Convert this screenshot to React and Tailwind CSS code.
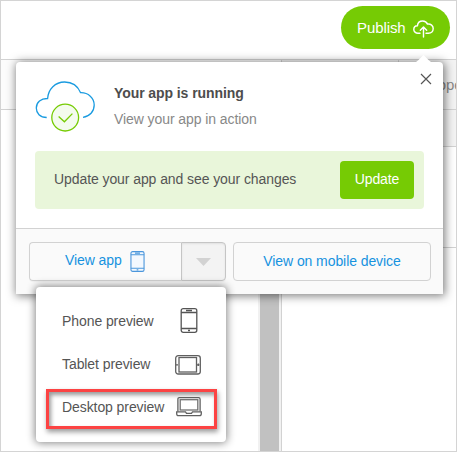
import React from "react";

const UploadCloud = () => (
  <svg width="21" height="18" viewBox="0 0 21 18" fill="none" stroke="#fff" strokeWidth="1.45" strokeLinecap="round" strokeLinejoin="round">
    <path d="M7 13.200H5C2.600 13.200.8 11.600.8 9.500c0-2 1.500-3.600 3.600-3.700C4.700 3 6.900 1 9.700 1c2.200 0 4 1.200 4.800 3.100 3.300-.4 5.700 1.600 5.700 4.500 0 2.700-2 4.600-4.700 4.600H13" />
    <path d="M10.500 17V7.300M7.300 10.300l3.200-3.200 3.200 3.200" />
  </svg>
);

const CloudCheck = () => (
  <svg width="62" height="54" viewBox="0 0 62 54" fill="none" strokeWidth="1.3">
    <path d="M11.700 37.500C5 37.500 1.300 33.300 1.300 28c0-5.500 4.700-9.700 11.300-9.500C13.300 9 20.200 2 29.600 2c7.200 0 13.200 4 16 10.700C53.300 12.500 59.200 18 59.200 25c0 6.500-4.500 11.400-11.200 12.300" stroke="#1a9be0" />
    <circle cx="30.200" cy="37.600" r="13.400" fill="#f4fbee" stroke="#76cb04" />
    <path d="M23.600 36.500l5.800 5.300 8-8.200" stroke="#76cb04" />
  </svg>
);

const Phone = ({ className, width, height, fill }) => (
  <svg className={className} width={width} height={height} viewBox="0 0 17 25" fill="none" stroke="currentColor" strokeWidth="1.3">
    <rect x=".7" y=".7" width="15.600" height="23.600" rx="2" fill={fill} />
    <path d="M.6 4.500h15.800M.6 20.500h15.800M5.500 2.500h6M7.500 22.500h2" />
  </svg>
);

const Tablet = () => (
  <svg width="26" height="20" viewBox="0 0 26 20" fill="none" stroke="#606060" strokeWidth="1.3">
    <rect x=".7" y=".7" width="24.600" height="18.300" rx="2.500" />
    <rect x="4" y="2.500" width="17.500" height="14.500" />
    <path d="M1 9.800h2M22 9.800h2.500M23.300 8.500v2.600" />
  </svg>
);

const Laptop = () => (
  <svg width="26" height="20" viewBox="0 0 26 20" fill="none" stroke="#606060" strokeWidth="1.3">
    <path d="M1.900 14.500V2.200Q1.900.7 3.400.7h19.200q1.500 0 1.500 1.500v12.300" />
    <rect x="4.200" y="2.700" width="17.600" height="10.300" stroke="#707070" />
    <path d="M.7 14.900h8.800l1 1.400h5l1-1.400h8.800v1.900q0 1.900-1.800 1.900h-21Q.7 18.700.7 16.800z" />
  </svg>
);

const Background = () => (
  <div className="flex h-full flex-col border border-[#d4d4d4] bg-white">
    <div className="flex h-[59px] shrink-0 justify-end border-b border-[#d2d2d2] pr-[6px] pt-[5px]">
      <button className="flex h-[43px] w-[109px] items-center rounded-full bg-[#76cb04] pl-[16px] text-[15px] text-white">
        <span className="w-[56px] whitespace-nowrap text-left">Publish</span>
        <span className="mt-[3px]"><UploadCloud /></span>
      </button>
    </div>
    <div className="flex min-h-0 flex-1">
      <div className="flex w-[281px] flex-col border-r border-[#d2d2d2]">
        <div className="h-[50px] shrink-0 border-b border-[#d2d2d2] bg-[#fcfcfc]" />
        <div className="flex flex-1 justify-end">
          <div className="flex w-[23px] bg-[#f1f1f1] pl-[2px]">
            <div className="h-full w-[19px] bg-[#c1c1c1]" />
          </div>
        </div>
      </div>
      <div className="flex min-w-0 flex-1 flex-col">
        <div className="flex h-[50px] shrink-0 border-b border-[#d2d2d2] bg-[#f3f3f3]">
          <div className="w-[117px] shrink-0 border-r border-[#d2d2d2]" />
          <div className="flex min-w-0 flex-1 items-center overflow-hidden pl-[24px] text-[15px] text-[#888]">Prope</div>
        </div>
        <div className="h-[37px] shrink-0 border-b border-[#d2d2d2] bg-[#f3f3f3]" />
        <div className="h-[101px] shrink-0 border-b border-[#d2d2d2]" />
      </div>
    </div>
  </div>
);

const PreviewMenu = () => (
  <div className="absolute left-[36px] top-[287px] flex h-[155px] w-[190px] flex-col rounded-[4px] bg-white px-[10px] pt-[13px] text-[14px] text-[#555] shadow-[0_0_9px_1px_rgba(0,0,0,0.48)]">
    <div className="flex h-[43px] items-center pl-[16px]">
      <span className="w-[118px] pb-px">Phone preview</span>
      <span className="-mt-[2px]"><Phone width={18} height={25} className="text-[#555]" fill="none" /></span>
    </div>
    <div className="flex h-[43px] items-center pl-[16px]">
      <span className="w-[113px] pb-px">Tablet preview</span>
      <Tablet />
    </div>
    <div className="mt-[3px] flex h-[40px] w-[171px] items-center border-[3px] border-[#fc4343] pb-[4px] pl-[13px] shadow-[inset_2px_3px_4px_rgba(0,0,0,0.4),1px_3px_5px_rgba(0,0,0,0.4)]">
      <span className="w-[114px] whitespace-nowrap">Desktop preview</span>
      <Laptop />
    </div>
  </div>
);

export default function App() {
  return (
    <div className="relative h-[452px] w-[457px] overflow-hidden font-['Liberation_Sans',Arial,sans-serif] text-[14px] leading-[18px] tracking-[-0.08px] text-[#555]">
      <Background />
      <section className="absolute left-[16px] top-[62px] flex h-[232px] w-[427px] flex-col rounded-t-[4px] bg-white shadow-[1px_1px_10px_1px_rgba(0,0,0,0.5)]">
        <svg className="absolute left-[398px] top-[-8px]" width="19" height="9" viewBox="0 0 19 9">
          <path d="M0 9Q2.500 8 4.500 6L9.500 1 14.500 6Q16.500 8 19 9z" fill="#fff" />
        </svg>
        <button className="absolute left-[404px] top-[11px]" aria-label="Close">
          <svg width="12" height="12" viewBox="0 0 12 12" stroke="#555" strokeWidth="1.150"><path d="M1 1l10 10M11 1L1 11" /></svg>
        </button>
        <div className="flex h-[89px] pl-[19px] pt-[18px]">
          <CloudCheck />
          <div className="flex flex-col gap-[8px] pl-[17px] pt-[4px]">
            <h1 className="text-[14px] font-bold leading-[18px] text-[#4d4d4d]">Your app is running</h1>
            <p className="text-[#888]">View your app in action</p>
          </div>
        </div>
        <div className="mx-[19px] flex h-[58px] items-center justify-between rounded-[4px] bg-[#e9f6da] pl-[19px] pr-[10px]">
          <span className="pb-[2px]">Update your app and see your changes</span>
          <button className="h-[38px] w-[74px] rounded-[4px] bg-[#76cb04] pb-[2px] text-white">Update</button>
        </div>
        <div className="mt-[19px] flex flex-1 border-t border-[#d2d2d2] bg-[#fafafa] pl-[13px] pt-[13px] text-[#1692df]">
          <div className="flex h-[39px] w-[197px] rounded-[4px] shadow-[0_1px_1px_rgba(0,0,0,0.04)]">
            <button className="flex w-[152px] items-center rounded-l-[4px] border border-r-0 border-[#d2d2d2] pl-[35px]">
              <span className="w-[65px] whitespace-nowrap pb-[3px] text-left">View app</span>
              <Phone width={15} height={21} className="text-[#4b96dc]" fill="#f3f8fe" />
            </button>
            <button className="flex w-[45px] items-center justify-center rounded-r-[4px] border border-[#c5c5c5] bg-[#f3f3f3] shadow-[inset_0_1px_2px_rgba(0,0,0,0.08)]" aria-label="Preview options">
              <svg width="15" height="8" viewBox="0 0 15 8"><path d="M0 0h15L7.500 8z" fill="#d2d2d2" /></svg>
            </button>
          </div>
          <button className="ml-[7px] h-[39px] w-[198px] rounded-[4px] border border-[#d2d2d2] pb-[2px]">View on mobile device</button>
        </div>
      </section>
      <PreviewMenu />
    </div>
  );
}
